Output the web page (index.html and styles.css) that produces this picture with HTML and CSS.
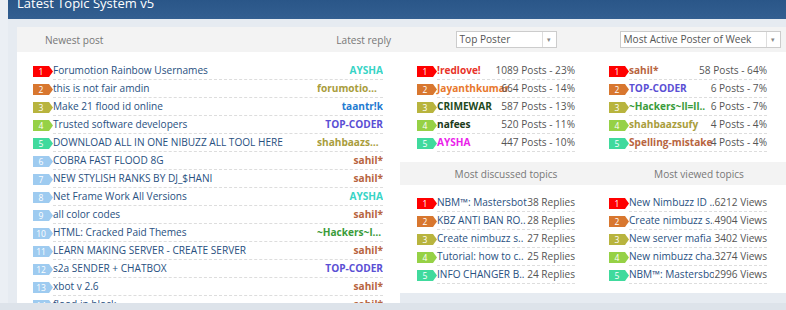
FILE: index.html
```html
<!DOCTYPE html>
<html lang="en">
<head>
    <meta charset="UTF-8">
    <meta name="viewport" content="width=device-width, initial-scale=1.0">
    <title>Latest Topic System v5</title>
    <link rel="stylesheet" href="styles.css">
</head>
<body>
<div class="page">
    <div class="module">
        <div class="moduleTitle">Latest Topic System v5</div>
        <div class="panel">
            <div class="panelHead">
                <div class="headNewest"><span>Newest post</span><span>Latest reply</span></div>
                <div class="headPick">
                    <div class="picker small"><span class="pickerText">Top Poster</span><span class="caret">&#9662;</span></div>
                </div>
                <div class="headPick wide">
                    <div class="picker large"><span class="pickerText">Most Active Poster of Week</span><span class="caret">&#9662;</span></div>
                </div>
            </div>

            <div class="panelBody">
                <ul class="newest">
                    <li><span class="rank r1">1</span><div class="line"><span class="title">Forumotion Rainbow Usernames</span><span class="user aysha">AYSHA</span></div></li>
                    <li><span class="rank r2">2</span><div class="line"><span class="title">this is not fair amdin</span><span class="user olive cut">forumotio…</span></div></li>
                    <li><span class="rank r3">3</span><div class="line"><span class="title">Make 21 flood id online</span><span class="user blue">taantr!k</span></div></li>
                    <li><span class="rank r4">4</span><div class="line"><span class="title">Trusted software developers</span><span class="user purple">TOP-CODER</span></div></li>
                    <li><span class="rank r5">5</span><div class="line"><span class="title">DOWNLOAD ALL IN ONE NIBUZZ ALL TOOL HERE</span><span class="user olive cut">shahbaazs…</span></div></li>
                    <li><span class="rank rx">6</span><div class="line"><span class="title">COBRA FAST FLOOD 8G</span><span class="user brown">sahil*</span></div></li>
                    <li><span class="rank rx">7</span><div class="line"><span class="title">NEW STYLISH RANKS BY DJ_$HANI</span><span class="user brown">sahil*</span></div></li>
                    <li><span class="rank rx">8</span><div class="line"><span class="title">Net Frame Work All Versions</span><span class="user aysha">AYSHA</span></div></li>
                    <li><span class="rank rx">9</span><div class="line"><span class="title">all color codes</span><span class="user brown">sahil*</span></div></li>
                    <li><span class="rank rx">10</span><div class="line"><span class="title">HTML: Cracked Paid Themes</span><span class="user green cut">~Hackers~l…</span></div></li>
                    <li><span class="rank rx">11</span><div class="line"><span class="title">LEARN MAKING SERVER - CREATE SERVER</span><span class="user brown">sahil*</span></div></li>
                    <li><span class="rank rx">12</span><div class="line"><span class="title">s2a SENDER + CHATBOX</span><span class="user purple">TOP-CODER</span></div></li>
                    <li><span class="rank rx">13</span><div class="line"><span class="title">xbot v 2.6</span><span class="user brown">sahil*</span></div></li>
                    <li><span class="rank rx">14</span><div class="line"><span class="title">flood in block</span><span class="user brown">sahil*</span></div></li>
                </ul>

                <div class="side">
                    <div class="sideLists">
                        <ul>
                            <li><span class="rank r1">1</span><div class="line"><span class="name red">!redlove!</span><span class="stat">1089 Posts - 23%</span></div></li>
                            <li><span class="rank r2">2</span><div class="line"><span class="name orange">Jayanthkumar</span><span class="stat">664 Posts - 14%</span></div></li>
                            <li><span class="rank r3">3</span><div class="line"><span class="name darkgreen">CRIMEWAR</span><span class="stat">587 Posts - 13%</span></div></li>
                            <li><span class="rank r4">4</span><div class="line"><span class="name darkergreen">nafees</span><span class="stat">520 Posts - 11%</span></div></li>
                            <li><span class="rank r5">5</span><div class="line"><span class="name magenta">AYSHA</span><span class="stat">447 Posts - 10%</span></div></li>
                        </ul>
                        <ul>
                            <li><span class="rank r1">1</span><div class="line"><span class="name brown">sahil*</span><span class="stat">58 Posts - 64%</span></div></li>
                            <li><span class="rank r2">2</span><div class="line"><span class="name purple">TOP-CODER</span><span class="stat">6 Posts - 7%</span></div></li>
                            <li><span class="rank r3">3</span><div class="line"><span class="name green">~Hackers~ll=ll..</span><span class="stat">6 Posts - 7%</span></div></li>
                            <li><span class="rank r4">4</span><div class="line"><span class="name olive">shahbaazsufy</span><span class="stat">4 Posts - 4%</span></div></li>
                            <li><span class="rank r5">5</span><div class="line"><span class="name brown">Spelling-mistake</span><span class="stat">4 Posts - 4%</span></div></li>
                        </ul>
                    </div>

                    <div class="sideHead"><div>Most discussed topics</div><div>Most viewed topics</div></div>

                    <div class="sideLists">
                        <ul>
                            <li><span class="rank r1">1</span><div class="line"><span class="title">NBM™: Mastersbot</span><span class="stat">38 Replies</span></div></li>
                            <li><span class="rank r2">2</span><div class="line"><span class="title">KBZ ANTI BAN RO..</span><span class="stat">28 Replies</span></div></li>
                            <li><span class="rank r3">3</span><div class="line"><span class="title">Create nimbuzz s..</span><span class="stat">27 Replies</span></div></li>
                            <li><span class="rank r4">4</span><div class="line"><span class="title">Tutorial: how to c..</span><span class="stat">25 Replies</span></div></li>
                            <li><span class="rank r5">5</span><div class="line"><span class="title">INFO CHANGER B..</span><span class="stat">24 Replies</span></div></li>
                        </ul>
                        <ul class="viewed">
                            <li><span class="rank r1">1</span><div class="line"><span class="title">New Nimbuzz ID ..</span><span class="stat">6212 Views</span></div></li>
                            <li><span class="rank r2">2</span><div class="line"><span class="title">Create nimbuzz s..</span><span class="stat">4904 Views</span></div></li>
                            <li><span class="rank r3">3</span><div class="line"><span class="title">New server mafia ..</span><span class="stat">3402 Views</span></div></li>
                            <li><span class="rank r4">4</span><div class="line"><span class="title">New nimbuzz cha..</span><span class="stat">3274 Views</span></div></li>
                            <li><span class="rank r5">5</span><div class="line"><span class="title">NBM™: Mastersbot..</span><span class="stat">2996 Views</span></div></li>
                        </ul>
                    </div>
                </div>
            </div>
        </div>
    </div>
</div>
</body>
</html>
```

FILE: styles.css
```css
body {
    margin: 0;
    background-color: #dde3ea;
    font-family: "Open Sans", "Noto Sans", sans-serif;
    font-size: 10.1px;
    overflow: hidden;
}

.page {
    height: 303px;
    padding-left: 8px;
    background-color: #ebeff4;
    overflow: hidden;
}

.module {
    height: 100%;
    background-color: #e6ebf1;
}

.moduleTitle {
    height: 19px;
    padding-left: 9px;
    line-height: 6px;
    font-size: 13px;
    color: #fff;
    background: linear-gradient(#2a5688, #335f91);
}

.panel {
    margin: 8px 0 0 9px;
}

.panelHead {
    display: flex;
    align-items: center;
    height: 25px;
    background-color: #f3f3f3;
    color: #777;
}

.headNewest {
    display: flex;
    justify-content: space-between;
    width: 383px;
    padding: 0 9px 0 28px;
    box-sizing: border-box;
}

.headPick {
    display: flex;
    justify-content: center;
    width: 212px;
}

.headPick.wide {
    flex: 1;
    padding-left: 2px;
}

.picker {
    display: flex;
    height: 17px;
    box-sizing: border-box;
    border: 1px solid #ccc;
    background-color: #fff;
    color: #555;
    line-height: 15px;
}

.picker.small {
    width: 101px;
}

.picker.large {
    width: 161px;
}

.pickerText {
    flex: 1;
    padding-left: 3px;
}

.caret {
    width: 13px;
    border-left: 1px solid #ddd;
    text-align: center;
    font-size: 7px;
    color: #888;
}

.panelBody {
    display: flex;
    align-items: flex-start;
}

ul {
    margin: 0;
    padding: 0;
    list-style: none;
}

.newest {
    width: 383px;
    height: 300px;
    padding: 10px 17px 0 16px;
    box-sizing: border-box;
    background-color: #fff;
}

.side {
    flex: 1;
    padding: 10px 0 9px;
    background-color: #fff;
}

.sideLists {
    display: grid;
    grid-template-columns: 192px 192px;
}

.sideLists ul {
    padding: 0 17px;
}

.sideHead {
    display: flex;
    align-items: center;
    height: 23px;
    margin: 10px 0 9px;
    background-color: #f3f3f3;
    color: #777;
}

.sideHead div {
    flex: 1;
    text-align: center;
}

.sideHead div:first-child {
    flex: none;
    width: 212px;
}

li {
    display: flex;
    height: 18px;
}

.rank {
    flex: none;
    width: 20px;
    height: 11px;
    margin-top: 4px;
    padding-right: 4px;
    box-sizing: border-box;
    clip-path: polygon(0 0, 16px 0, 20px 50%, 16px 100%, 0 100%);
    color: #fff;
    font-size: 8.5px;
    line-height: 11px;
    text-align: center;
}

.r1 { background-color: #ff0000; }
.r2 { background-color: #d8772f; }
.r3 { background-color: #b8b43e; }
.r4 { background-color: #96d146; }
.r5 { background-color: #40da9d; }
.rx { background-color: #9ecbf0; }

.line {
    flex: 1;
    min-width: 0;
    display: flex;
    height: 17px;
    line-height: 17px;
    border-bottom: 1px dashed #ddd;
    white-space: nowrap;
}

.title {
    flex: 1;
    min-width: 0;
    color: #28507f;
}

.viewed .title {
    overflow: hidden;
}

.user {
    flex: none;
    width: 66px;
    text-align: right;
    font-weight: bold;
    overflow: hidden;
}

.user.cut {
    text-align: left;
}

.name {
    flex: 1;
    min-width: 0;
    font-weight: bold;
}

.stat {
    flex: none;
    color: #555;
}

.aysha { color: #38d4c6; }
.olive { color: #a99d3c; }
.blue { color: #1f7bd1; }
.purple { color: #5a4fd4; }
.brown { color: #b8653f; }
.green { color: #3a9c3a; }
.red { color: #e8342a; }
.orange { color: #e8782e; }
.darkgreen { color: #1d4a1d; }
.darkergreen { color: #1a3a1a; }
.magenta { color: #ea1fea; }
```
